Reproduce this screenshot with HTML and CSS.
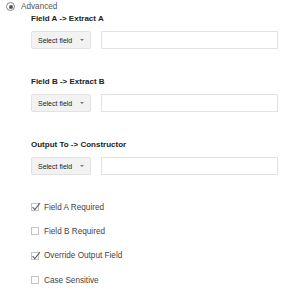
FILE: index.html
```html
<!DOCTYPE html>
<html lang="en">
<head>
    <meta charset="UTF-8">
    <title>Advanced Mapping</title>
    <link rel="stylesheet" href="styles.css">
</head>
<body>
    <div class="panel">
        <!-- Mode -->
        <label class="mode-option">
            <span class="radio checked"></span>
            <span class="mode-label">Advanced</span>
        </label>

        <div class="settings">
            <div class="group">
                <h3 class="group-title">Field A -&gt; Extract A</h3>
                <div class="field-row">
                    <button class="select-button">Select field <span class="caret"></span></button>
                    <input type="text" class="text-input">
                </div>
            </div>

            <div class="group">
                <h3 class="group-title">Field B -&gt; Extract B</h3>
                <div class="field-row">
                    <button class="select-button">Select field <span class="caret"></span></button>
                    <input type="text" class="text-input">
                </div>
            </div>

            <div class="group">
                <h3 class="group-title">Output To -&gt; Constructor</h3>
                <div class="field-row">
                    <button class="select-button">Select field <span class="caret"></span></button>
                    <input type="text" class="text-input">
                </div>
            </div>

            <!-- Options -->
            <div class="options">
                <label class="option">
                    <span class="checkbox checked">
                        <svg viewBox="0 0 10 10" width="10" height="10"><path d="M1.5 5.2 L3.8 7.6 L9 1.2" fill="none" stroke="#666" stroke-width="1.1"/></svg>
                    </span>
                    Field A Required
                </label>
                <label class="option">
                    <span class="checkbox"></span>
                    Field B Required
                </label>
                <label class="option">
                    <span class="checkbox checked">
                        <svg viewBox="0 0 10 10" width="10" height="10"><path d="M1.5 5.2 L3.8 7.6 L9 1.2" fill="none" stroke="#666" stroke-width="1.1"/></svg>
                    </span>
                    Override Output Field
                </label>
                <label class="option">
                    <span class="checkbox"></span>
                    Case Sensitive
                </label>
            </div>
        </div>
    </div>
</body>
</html>
```

FILE: styles.css
```css
* {
    box-sizing: border-box;
    margin: 0;
    padding: 0;
}

body {
    font-family: "Liberation Sans", Arial, sans-serif;
    color: #333;
    background: #fff;
    width: 300px;
    height: 291px;
    overflow: hidden;
}

.panel {
    padding: 2px 0 0 6px;
}

.mode-option {
    display: flex;
    align-items: center;
    gap: 6px;
    height: 9px;
}

.radio {
    width: 9px;
    height: 9px;
    border: 1px solid #8a8a8a;
    border-radius: 50%;
    display: flex;
    align-items: center;
    justify-content: center;
}

.radio.checked::after {
    content: "";
    width: 4px;
    height: 4px;
    border-radius: 50%;
    background: #555;
}

.mode-label {
    font-size: 8.2px;
    line-height: 9px;
    color: #555;
}

.settings {
    padding-left: 25px;
}

.group {
    margin-bottom: 28px;
}

.group:first-child {
    margin-top: 3px;
}

.group-title {
    font-size: 8px;
    font-weight: bold;
    line-height: 10px;
    color: #222;
}

.field-row {
    display: flex;
    gap: 10px;
    margin-top: 7px;
}

.select-button {
    width: 60px;
    height: 18px;
    padding: 0 0 0 6px;
    display: flex;
    align-items: center;
    font-family: inherit;
    font-size: 7px;
    color: #222;
    background: #f2f2f2;
    border: 1px solid #e2e2e2;
    border-radius: 2px;
    text-align: left;
}

.caret {
    margin-left: 8px;
    width: 0;
    height: 0;
    border-left: 2px solid transparent;
    border-right: 2px solid transparent;
    border-top: 2px solid #777;
}

.text-input {
    width: 177px;
    height: 18px;
    border: 1px solid #e2e2e2;
    background: #fff;
}

.options {
    margin-top: -8px;
    display: flex;
    flex-direction: column;
}

.option {
    display: flex;
    align-items: center;
    gap: 5px;
    height: 24.3px;
    font-size: 8.2px;
    color: #444;
}

.checkbox {
    position: relative;
    width: 8px;
    height: 8px;
    border: 1px solid #c4c4c4;
    background: #fff;
}

.checkbox svg {
    position: absolute;
    left: -1px;
    top: -2px;
}
```
